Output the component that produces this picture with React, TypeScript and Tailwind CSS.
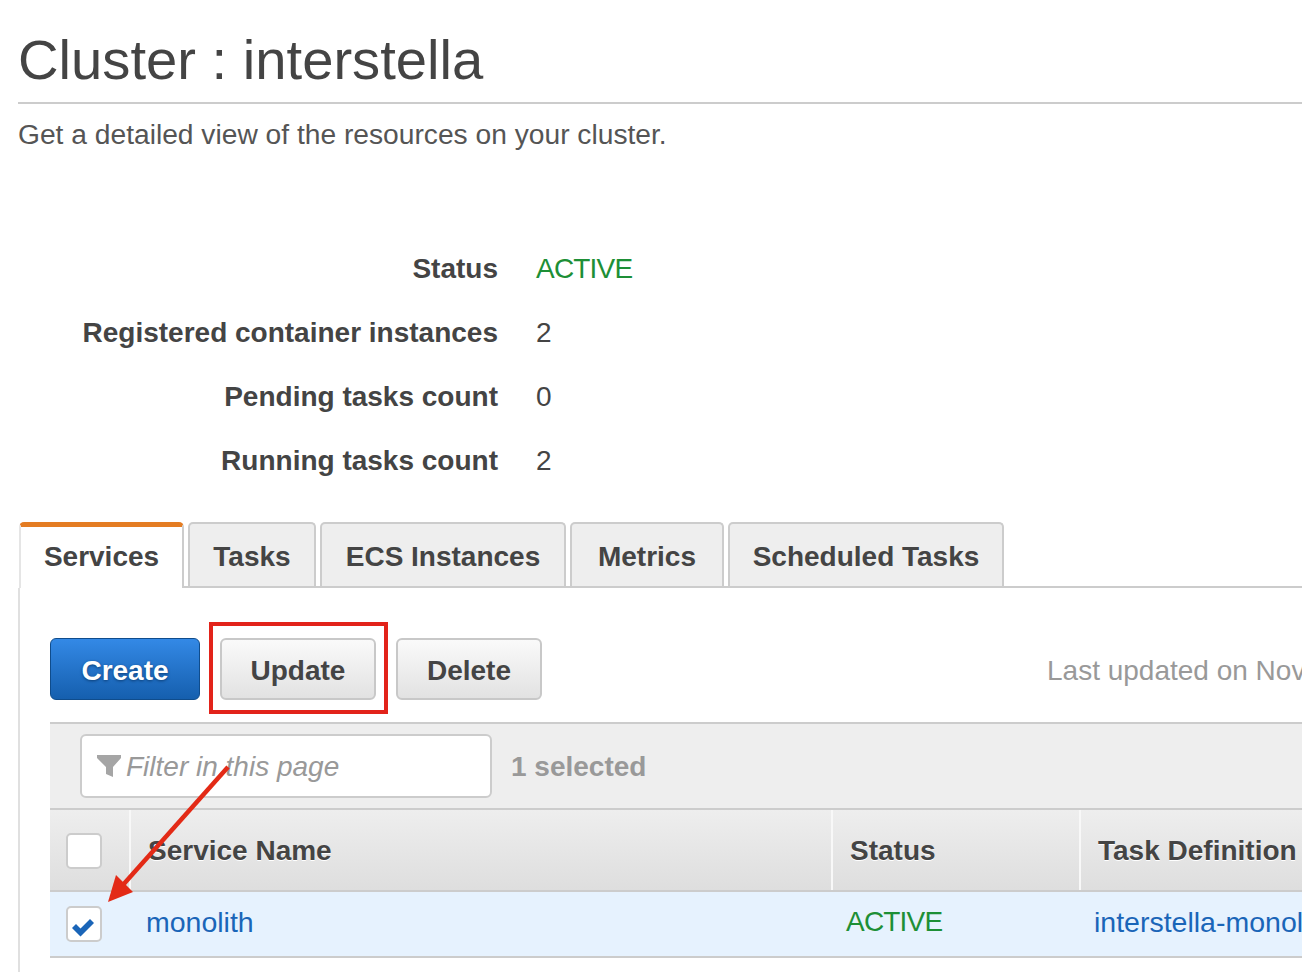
import React from 'react';

const tabs = [
  { label: 'Tasks', w: 'w-[128px]' },
  { label: 'ECS Instances', w: 'w-[246px]' },
  { label: 'Metrics', w: 'w-[154px]' },
  { label: 'Scheduled Tasks', w: 'w-[276px]' },
];

const details = [
  { label: 'Status', value: 'ACTIVE', green: true },
  { label: 'Registered container instances', value: '2' },
  { label: 'Pending tasks count', value: '0' },
  { label: 'Running tasks count', value: '2' },
];

const App: React.FC = () => {
  return (
    <div className="relative w-[1302px] h-[972px] overflow-hidden bg-white text-[#444] font-['Liberation_Sans',Arial,sans-serif] text-[28px]">
      {/* Header */}
      <div className="pl-[18px]">
        <h1 className="h-[104px] pt-[24px] border-b-2 border-[#ccc] text-[56.2px] leading-[72px] text-[#444]">Cluster : interstella</h1>
        <p className="mt-[14px] text-[28.2px] leading-[32px] text-[#555]">Get a detailed view of the resources on your cluster.</p>
      </div>

      {/* Details */}
      <div className="mt-[103px] flex flex-col gap-[32px]">
        {details.map((d) => (
          <div key={d.label} className="flex h-[32px] items-center leading-[32px]">
            <div className="w-[498px] text-right font-bold text-[#444]">{d.label}</div>
            <div className={d.green ? 'ml-[38px] tracking-[-0.8px] text-[#1d8f36]' : 'ml-[38px] text-[#444]'}>{d.value}</div>
          </div>
        ))}
      </div>

      {/* Tabs */}
      <div className="mt-[45px] ml-[19px] flex h-[66px] border-b-2 border-[#ccc]">
        <div className="z-10 -mb-[2px] flex h-[66px] w-[165px] shrink-0 items-center justify-center rounded-t-[5px] border-t-[5px] border-r-2 border-l-2 border-t-[#e47c22] border-r-[#ccc] border-l-[#e5e5e5] bg-white pb-[2px] font-bold text-[#444]">
          Services
        </div>
        <div className="ml-[4px] flex gap-[4px]">
          {tabs.map((t) => (
            <div key={t.label} className={`${t.w} flex h-[64px] items-center justify-center rounded-t-[5px] border-2 border-b-0 border-[#ccc] bg-[#eee] pt-[4px] font-bold text-[#444]`}>
              {t.label}
            </div>
          ))}
        </div>
      </div>

      {/* Panel */}
      <div className="ml-[18px] h-[400px] border-l-2 border-[#e0e0e0] pl-[30px]">
        <div className="flex h-[134px] pt-[50px]">
          <button className="h-[62px] w-[150px] shrink-0 rounded-[6px] border border-[#0f4c8c] bg-gradient-to-b from-[#3389e6] to-[#155fae] pt-[3px] font-bold text-white [text-shadow:0_1px_3px_#0b3d75]">Create</button>
          <button className="ml-[20px] h-[62px] w-[156px] shrink-0 rounded-[6px] border-2 border-[#c8c8c8] bg-gradient-to-b from-[#fafafa] to-[#e2e2e2] pt-[3px] font-bold text-[#444]">Update</button>
          <button className="ml-[20px] h-[62px] w-[146px] shrink-0 rounded-[6px] border-2 border-[#c8c8c8] bg-gradient-to-b from-[#fafafa] to-[#e2e2e2] pt-[3px] font-bold text-[#444]">Delete</button>
          <div className="ml-[505px] shrink-0 whitespace-nowrap pt-[17px] leading-[32px] text-[#999]">Last updated on Nov</div>
        </div>

        {/* Toolbar */}
        <div className="flex h-[88px] w-[1252px] border-y-2 border-[#ccc] bg-[#eee] pl-[30px] pt-[10px]">
          <div className="flex h-[64px] w-[412px] shrink-0 items-center rounded-[6px] border-2 border-[#ccc] bg-white pl-[15px] pt-[1px] italic text-[#999]">
            <svg viewBox="0 0 24 24" className="mb-[1px] h-[24px] w-[24px] fill-[#a5a5a5]">
              <path d="M0 1h24v3L16 13v10l-7-3v-7L0 4z" />
            </svg>
            <span className="ml-[5px]">Filter in this page</span>
          </div>
          <div className="ml-[19px] pt-[17px] leading-[32px] font-bold text-[#999]">1 selected</div>
        </div>

        {/* Table header */}
        <div className="flex h-[82px] w-[1252px] border-b-2 border-[#ccc] bg-gradient-to-b from-[#eeeeee] to-[#dedede] pt-[1px] font-bold text-[#444] [text-shadow:0_1px_0_#fff]">
          <div className="flex w-[79px] shrink-0 items-center pl-[16px]">
            <div className="h-[36px] w-[36px] rounded-[5px] border-2 border-[#ccc] bg-white" />
          </div>
          <div className="-mt-[1px] flex w-[702px] shrink-0 items-center border-l-2 border-[#f8f8f8] pl-[17px] pt-[1px]">Service Name</div>
          <div className="-mt-[1px] flex w-[248px] shrink-0 items-center border-l-2 border-[#f8f8f8] pl-[17px] pt-[1px]">Status</div>
          <div className="-mt-[1px] flex flex-1 items-center whitespace-nowrap border-l-2 border-[#f8f8f8] pl-[17px] pt-[1px]">Task Definition</div>
        </div>

        {/* Row */}
        <div className="flex h-[66px] w-[1252px] items-center border-b-2 border-[#ccc] bg-[#e6f2fe]">
          <div className="flex w-[96px] shrink-0 items-center pl-[16px]">
            <div className="flex h-[36px] w-[36px] items-center justify-center rounded-[5px] border-2 border-[#ccc] bg-white">
              <svg viewBox="0 0 24 24" className="mr-[2px] mt-[5px] h-[24px] w-[24px] fill-[#1a65b8]">
                <path d="M1 13l4-4 4.5 4.5L19 4l4 4-13.5 13.5z" />
              </svg>
            </div>
          </div>
          <div className="mb-[4px] w-[700px] shrink-0 text-[28.5px] text-[#1a65b8]">monolith</div>
          <div className="mb-[4px] w-[248px] shrink-0 tracking-[-0.8px] text-[#1d8f36]">ACTIVE</div>
          <div className="mb-[4px] shrink-0 whitespace-nowrap text-[28.5px] text-[#1a65b8]">interstella-monol</div>
        </div>
      </div>

      {/* Red annotation box around Update */}
      <div className="absolute left-[209px] top-[622px] h-[92px] w-[179px] border-[4px] border-[#e2231a]" />

      {/* Red annotation arrow */}
      <svg className="absolute left-0 top-0 h-[972px] w-[1302px]" viewBox="0 0 1302 972" fill="none">
        <line x1="228" y1="767" x2="122" y2="886" stroke="#e32a16" strokeWidth="4.5" />
        <path d="M108 902 L116 875 L133 892 Z" fill="#e32a16" />
      </svg>
    </div>
  );
};

export default App;
